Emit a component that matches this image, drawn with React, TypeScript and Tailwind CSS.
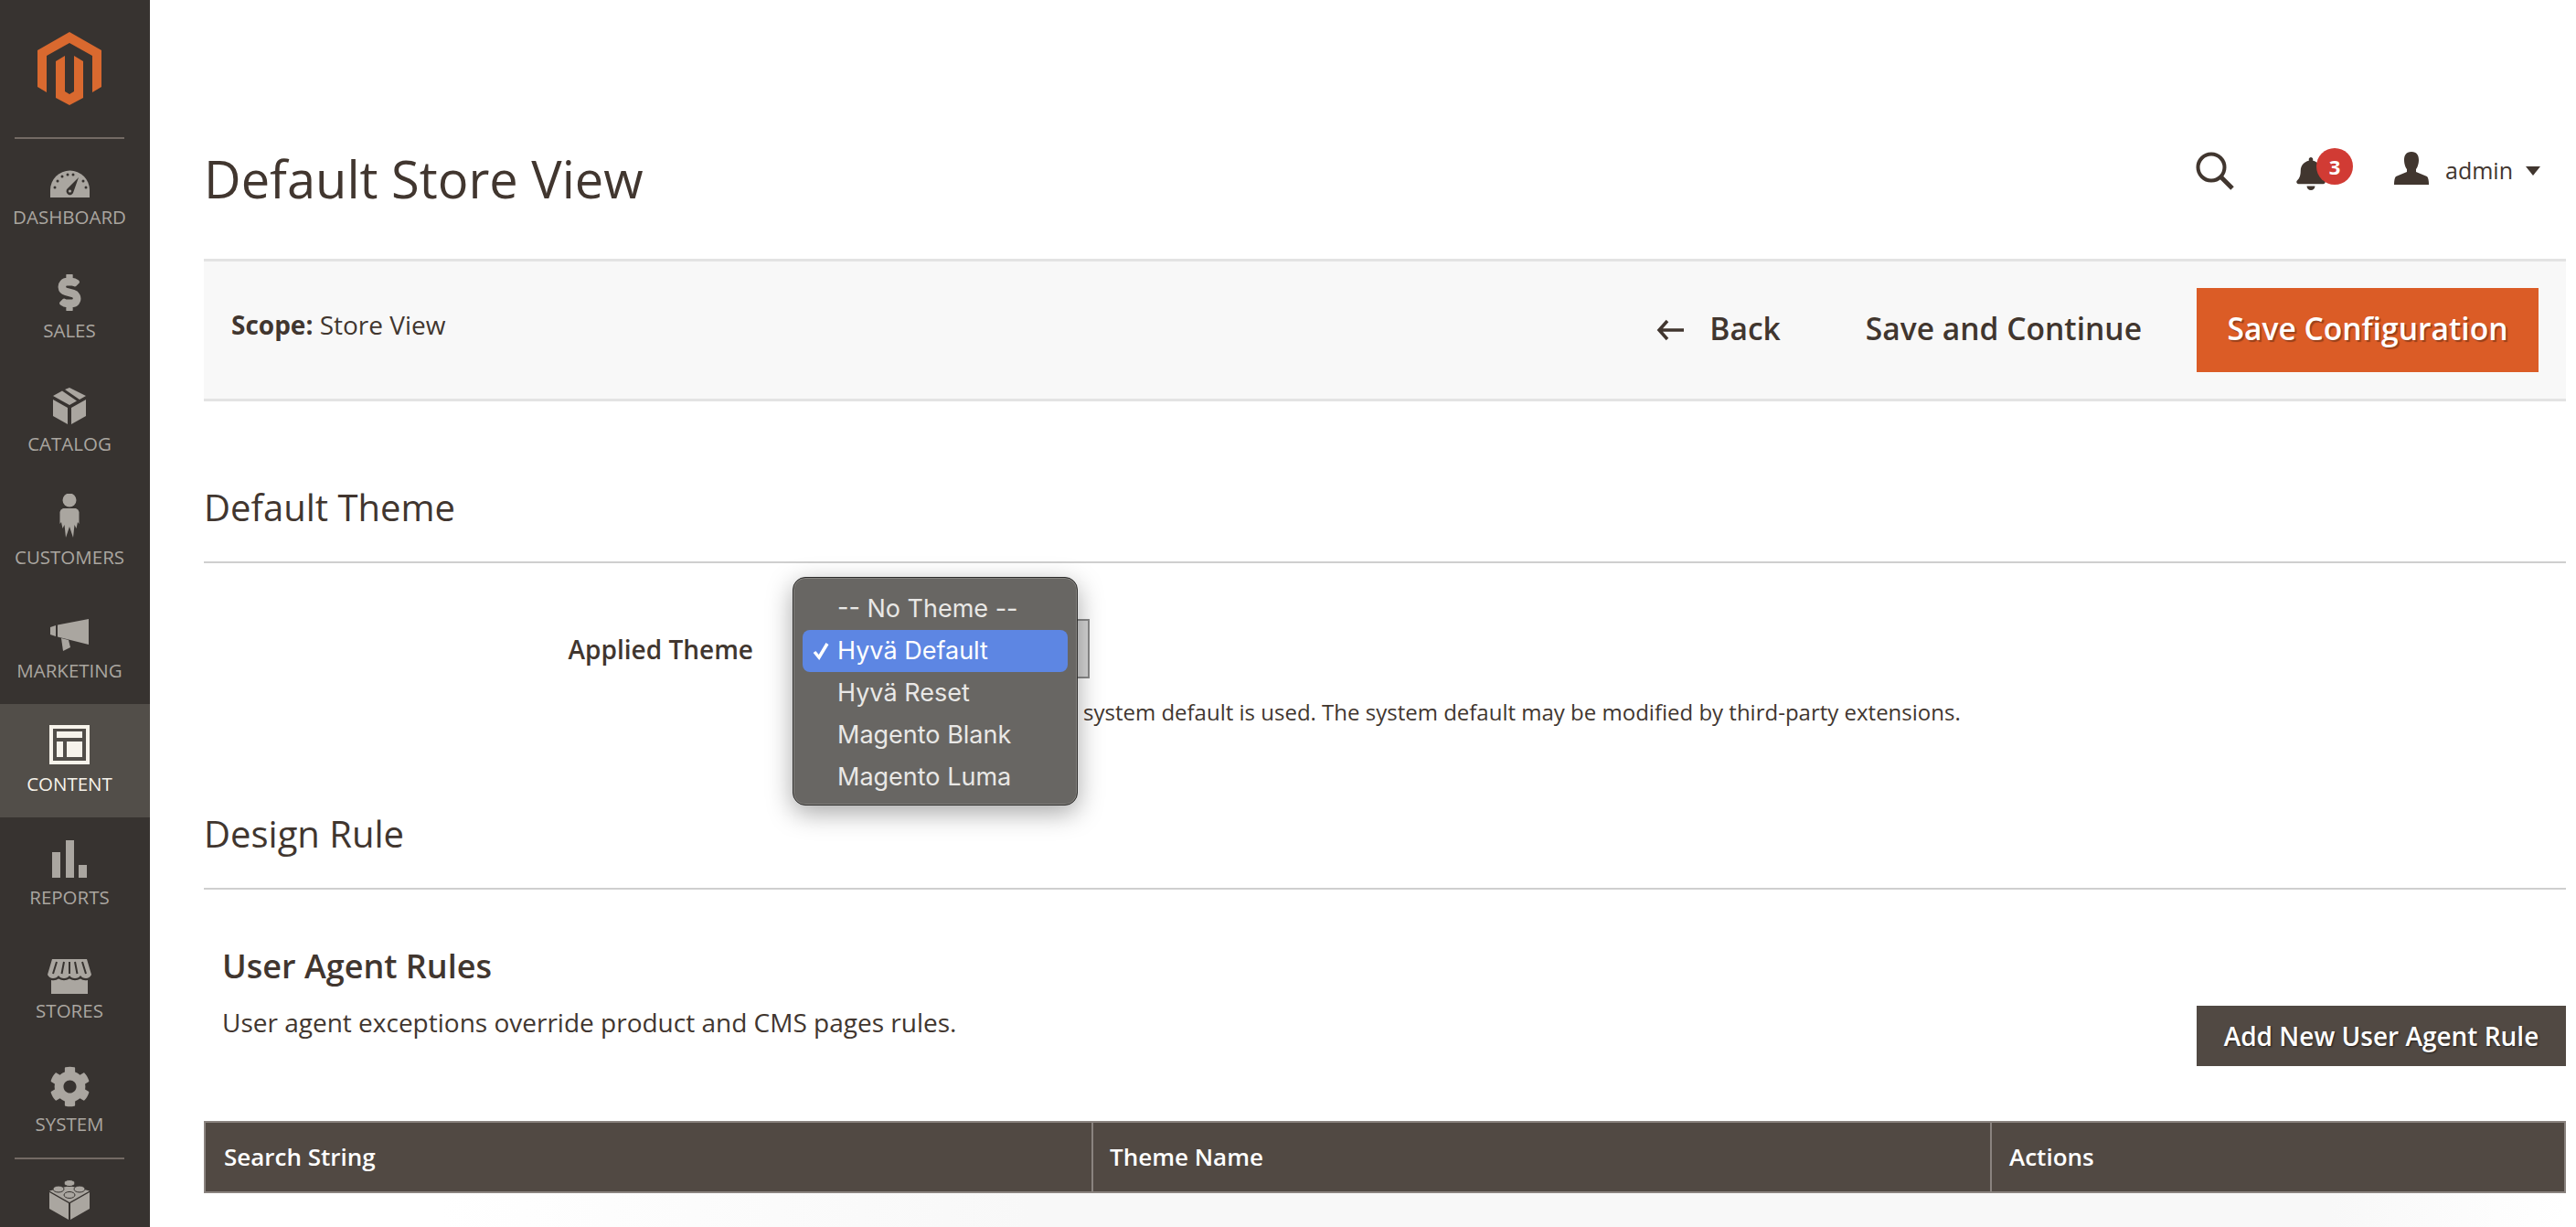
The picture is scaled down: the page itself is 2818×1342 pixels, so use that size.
import type { ReactNode } from "react";
import { FaCog, FaBell, FaDollarSign } from "react-icons/fa";

const menu: { label: string; icon: ReactNode; active?: boolean }[] = [
  {
    label: "Dashboard",
    icon: (
      <svg width="43" height="30" viewBox="0 0 43 30">
        <path d="M0 30V22A21.5 21.5 0 0 1 43 22V30Z" fill="#aaa6a0" />
        <g fill="#373330">
          <circle cx="5" cy="19" r="1.5" />
          <circle cx="8" cy="12" r="1.5" />
          <circle cx="13" cy="7" r="1.5" />
          <circle cx="19" cy="5" r="1.5" />
          <circle cx="25" cy="5" r="1.5" />
          <circle cx="36" cy="12" r="1.5" />
          <circle cx="39" cy="19" r="1.5" />
        </g>
        <path d="M31 8L25.5 23.5A4 4 0 1 1 19 20Z" fill="#373330" />
        <circle cx="21.5" cy="23" r="1.6" fill="#aaa6a0" />
      </svg>
    ),
  },
  {
    label: "Sales",
    icon: <FaDollarSign className="h-[40px] w-[26px] text-[#aaa6a0]" stroke="currentColor" strokeWidth={30} />,
  },
  {
    label: "Catalog",
    icon: (
      <svg width="36" height="40" viewBox="0 0 36 40" fill="#aaa6a0">
        <path d="M0 13L16 22V40L0 31ZM36 13L20 22V40L36 31Z" />
        <path d="M13 2L18 0L36 9L29 13ZM10 3.500L26 14.500L18 19L0 9Z" />
      </svg>
    ),
  },
  {
    label: "Customers",
    icon: (
      <svg width="22" height="48" viewBox="0 0 22 48" fill="#aaa6a0">
        <circle cx="11" cy="7" r="7.500" />
        <path d="M4 16H18Q21 17 21.500 20V33L20 31L18.500 38L16.500 34L15 48L11 36L7 48L5.500 34L3.500 38L2 31L0.500 33V20Q1 17 4 16Z" />
      </svg>
    ),
  },
  {
    label: "Marketing",
    icon: (
      <svg width="42" height="35" viewBox="0 0 42 35" fill="#aaa6a0">
        <path d="M0 9L6 7V19L0 17ZM8 6.500L42 0V28L8 19.500Z" />
        <path d="M12 21L20 23L22 31L14 35Z" />
      </svg>
    ),
  },
  {
    label: "Content",
    active: true,
    icon: (
      <svg width="44" height="43" viewBox="0 0 44 43" fill="#f7f3eb">
        <path fillRule="evenodd" d="M0 0H44V43H0ZM4 4V39H40V4Z" />
        <path d="M8 7H36V14H8ZM8 18H15V35H8ZM19 18H36V35H19Z" />
      </svg>
    ),
  },
  {
    label: "Reports",
    icon: (
      <svg width="38" height="41" viewBox="0 0 38 41" fill="#aaa6a0">
        <path d="M0 13H9V41H0ZM15 0H24V41H15ZM29 27H38V41H29Z" />
      </svg>
    ),
  },
  {
    label: "Stores",
    icon: (
      <svg className="mb-[-3px]" width="48" height="38" viewBox="0 0 48 38" fill="#aaa6a0">
        <path d="M5 0H43L48 17Q46 21 42 21Q38 21 36 18Q34 21 30 21Q26 21 24 18Q22 21 18 21Q14 21 12 18Q10 21 6 21Q2 21 0 17Z" />
        <path d="M4 23Q9 24 12 21.500Q18 25 24 21.500Q30 25 36 21.500Q39 24 44 23V38H4Z" />
        <path d="M10 3L6 16M18 3L15.500 16M24 3V16M30 3L32.500 16M38 3L42 16" stroke="#373330" strokeWidth="2" />
      </svg>
    ),
  },
  {
    label: "System",
    icon: <FaCog className="mb-[-3px] h-[45px] w-[45px] text-[#aaa6a0]" />,
  },
];

function LegoIcon() {
  return (
    <svg width="44" height="44" viewBox="0 0 44 44" fill="#aaa6a0">
      <path d="M0 14V32L21 44V26ZM44 14V32L23 44V26Z" />
      <path d="M22 7L44 12.500L22 25L0 12.500Z" />
      <g stroke="#373330" strokeWidth="1">
        <ellipse cx="22" cy="4" rx="6" ry="3.500" />
        <ellipse cx="10" cy="10.500" rx="6" ry="3.500" />
        <ellipse cx="33" cy="10.500" rx="6" ry="3.500" />
        <ellipse cx="22" cy="17" rx="6" ry="3.500" />
      </g>
    </svg>
  );
}

function Divider() {
  return <div className="ml-[16px] h-[2px] w-[120px] shrink-0 bg-[#736a64]" />;
}

function MenuItem({ label, icon, active }: { label: string; icon: ReactNode; active?: boolean }) {
  return (
    <div className={`flex h-[124px] shrink-0 flex-col items-center pr-[12px] ${active ? "bg-[#524e49] text-[#f7f3eb]" : "text-[#aaa6a0]"}`}>
      <div className="flex h-[66px] items-end">{icon}</div>
      <div className="mt-[7px] text-[20.5px] leading-[28px] uppercase">{label}</div>
    </div>
  );
}

function Sidebar() {
  return (
    <aside className="flex h-full w-[164px] shrink-0 flex-col overflow-hidden bg-[#373330]">
      <div className="flex h-[150px] shrink-0 justify-center pt-[35px] pr-[12px]">
        <svg width="70" height="80" viewBox="0 0 70 80" fill="#d9692f">
          <path d="M35 0L70 20V60L60 66V26L35 12L10 26V66L0 60V20Z" />
          <path d="M20 32L30 26V65L35 68L40 65V26L50 32V72L35 80L20 72Z" />
        </svg>
      </div>
      <Divider />
      <div className="-mt-[2px] flex flex-col">
        {menu.map((m) => (
          <MenuItem key={m.label} {...m} />
        ))}
      </div>
      <Divider />
      <div className="flex h-[66px] shrink-0 items-end justify-center pr-[12px]">
        <LegoIcon />
      </div>
    </aside>
  );
}

function SectionTitle({ children, height }: { children: ReactNode; height: string }) {
  return (
    <div className={`flex items-end border-b-2 border-[#cfcfcf] pb-[38px] text-[40px] leading-[42px] ${height}`}>
      {children}
    </div>
  );
}

function ThemeDropdown() {
  const options = ["-- No Theme --", "Hyvä Default", "Hyvä Reset", "Magento Blank", "Magento Luma"];
  return (
    <div className="absolute top-[-48px] left-[-5px] z-10 flex h-[250px] w-[312px] flex-col rounded-[14px] border border-[#2d2c2b] bg-[#686663] px-[10px] pt-[11px] pb-[7px] font-['Inter',sans-serif] text-[27px] leading-[46px] text-[#e9e8e6] shadow-[0_8px_28px_rgba(0,0,0,0.35),inset_0_0_0_1px_#85837f]">
      {options.map((o) => (
        <div
          key={o}
          className={`relative h-[46px] shrink-0 rounded-[8px] pl-[38px] ${o === "Hyvä Default" ? "bg-[#5d86e3] text-white" : ""}`}
        >
          {o === "Hyvä Default" && (
            <svg className="absolute top-[13px] left-[11px]" width="18" height="20" viewBox="0 0 18 20" fill="none">
              <path d="M2 11L7 17L16 2" stroke="white" strokeWidth="3.500" />
            </svg>
          )}
          {o}
        </div>
      ))}
    </div>
  );
}

export default function App() {
  return (
    <div className="flex h-screen w-full overflow-hidden bg-white font-['Open_Sans',sans-serif] text-[#41362f]">
      <Sidebar />
      <main className="flex min-w-0 flex-1 flex-col overflow-hidden pr-[11px] pl-[59px]">
        <header className="flex h-[283px] shrink-0 items-start justify-between">
          <h1 className="mt-[157px] text-[56px] leading-[76px]">Default Store View</h1>
          <div className="mt-[166px] flex items-start pr-[28px]">
            <svg width="42" height="42" viewBox="0 0 42 42" fill="none" stroke="#41362f">
              <circle cx="17" cy="17" r="14.500" strokeWidth="4" />
              <path d="M27 27L40 40" strokeWidth="5" />
            </svg>
            <div className="relative ml-[68px] h-[40px] w-[62px]">
              <FaBell className="mt-[6px] h-[36px] w-[32px] text-[#41362f]" />
              <span className="absolute top-[-4px] right-[0px] flex h-[40px] w-[40px] items-center justify-center rounded-full bg-[#d13b34] text-[22px] font-bold text-white">
                3
              </span>
            </div>
            <svg className="ml-[45px]" width="38" height="36" viewBox="0 0 38 36" fill="#41362f">
              <path d="M19 0C25 0 27 4 27 9C27 14 25 18 24 19V22L36 27Q38 29 38 36H0Q0 29 2 27L14 22V19C13 18 11 14 11 9C11 4 13 0 19 0Z" />
            </svg>
            <span className="ml-[18px] text-[25px] leading-[40px]">admin</span>
            <svg className="mt-[16px] ml-[14px]" width="16" height="10" viewBox="0 0 16 10" fill="#41362f">
              <path d="M0 0H16L8 10Z" />
            </svg>
          </div>
        </header>

        <section className="flex h-[156px] shrink-0 items-center justify-between border-y-[3px] border-[#e3e3e3] bg-[#f8f8f8] pr-[30px] pl-[30px]">
          <div className="mb-[12px] text-[28px]">
            <span className="font-bold">Scope:</span> Store View
          </div>
          <div className="flex items-center text-[33.6px] font-semibold">
            <svg width="30" height="24" viewBox="0 0 30 24" fill="none" stroke="#41362f" strokeWidth="3.500">
              <path d="M12 2L3 12L12 22M3 12H30" />
            </svg>
            <span className="mb-[3px] ml-[28px]">Back</span>
            <span className="mb-[3px] ml-[93px]">Save and Continue</span>
            <button className="ml-[60px] flex h-[92px] w-[374px] items-center justify-center bg-[#db5c26] pb-[3px] font-semibold text-white [text-shadow:2px_2px_1px_rgba(0,0,0,0.3)]">
              Save Configuration
            </button>
          </div>
        </section>

        <SectionTitle height="h-[177px]">Default Theme</SectionTitle>

        <div className="mt-[61px] flex h-[141px] shrink-0 items-start">
          <div className="mt-[13px] w-[601px] text-right text-[28px] leading-[40px] font-semibold">Applied Theme</div>
          <div className="ml-[46px]">
            <div className="relative h-[65px] w-[322px] border-2 border-[#8a8a8a] bg-[#d6d6d6]">
              <ThemeDropdown />
            </div>
            <p className="mt-[22px] ml-[315px] text-[24px] leading-[30px] whitespace-nowrap">
              system default is used. The system default may be modified by third-party extensions.
            </p>
          </div>
        </div>

        <SectionTitle height="h-[155px]">Design Rule</SectionTitle>

        <div className="flex shrink-0 items-start justify-between pl-[20px]">
          <div>
            <h3 className="mt-[60px] text-[36px] leading-[48px] font-semibold">User Agent Rules</h3>
            <p className="mt-[18px] text-[28px] leading-[38px]">User agent exceptions override product and CMS pages rules.</p>
          </div>
          <button className="mt-[127px] flex h-[66px] w-[404px] items-center justify-center bg-[#514943] text-[28px] font-semibold text-white [text-shadow:1px_1px_2px_rgba(0,0,0,0.6)]">
            Add New User Agent Rule
          </button>
        </div>

        <div className="mt-[60px] grid h-[79px] shrink-0 grid-cols-[969px_983px_1fr] border-2 border-[#8a837f] bg-[#514943] text-[26px] font-semibold text-white">
          <div className="flex items-center pl-[20px]">Search String</div>
          <div className="flex items-center border-l-2 border-[#8a837f] pl-[18px]">Theme Name</div>
          <div className="flex items-center border-l-2 border-[#8a837f] pl-[19px]">Actions</div>
        </div>
        <div className="h-[37px] shrink-0 bg-[linear-gradient(90deg,#ffffff_10%,#f8f8f8_35%,#f8f8f8_90%,#ffffff)]" />
      </main>
    </div>
  );
}
